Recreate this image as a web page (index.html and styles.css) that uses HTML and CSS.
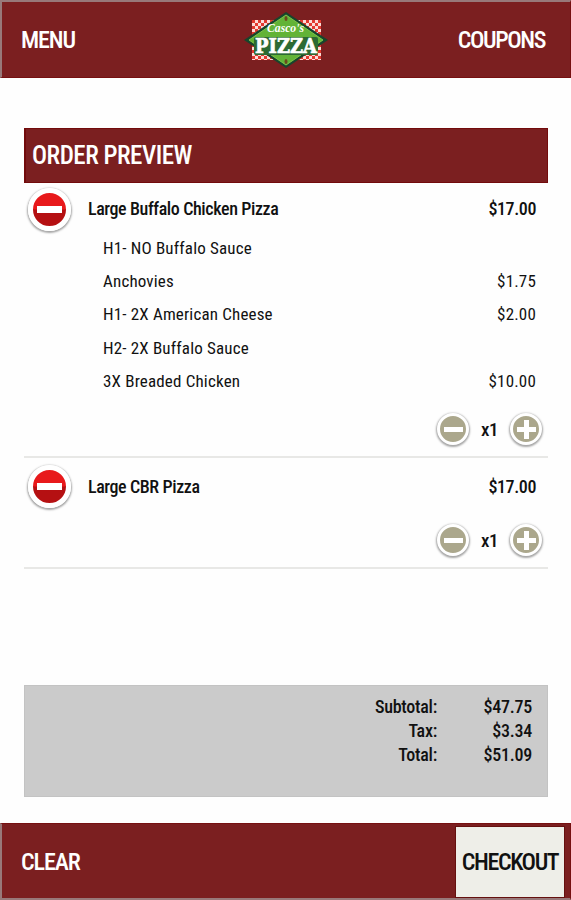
FILE: index.html
```html
<!DOCTYPE html>
<html lang="en">
  <head>
    <meta charset="UTF-8" />
    <meta name="viewport" content="width=device-width, initial-scale=1.0" />
    <title>Order Preview</title>
    <link rel="stylesheet" href="styles.css">
  </head>
  <body>
    <header class="topbar">
      <a class="nav-link">MENU</a>
      <svg class="logo" width="86" height="58" viewBox="0 0 86 58">
        <defs>
          <pattern id="check" width="6" height="6" patternUnits="userSpaceOnUse">
            <rect width="6" height="6" fill="#fbdcd8" />
            <rect width="3" height="3" fill="#e2392f" />
            <rect x="3" y="3" width="3" height="3" fill="#e2392f" />
          </pattern>
        </defs>
        <rect x="9" y="9" width="69" height="40" fill="url(#check)" />
        <path d="M43 1L85 29L43 57L1 29Z" fill="#17452c" />
        <path d="M43 4L80 29L43 54L6 29Z" fill="#62b337" stroke="#7cc648" stroke-width="1" />
        <ellipse cx="43" cy="7.500" rx="1.500" ry="2.500" fill="#6b4a1d" />
        <ellipse cx="43" cy="50.500" rx="1.500" ry="2.500" fill="#6b4a1d" />
        <rect class="logo-shade" x="11" y="26" width="64" height="18" rx="2" />
        <text class="logo-script" x="24" y="21" textLength="37" lengthAdjust="spacingAndGlyphs">Casco's</text>
        <text class="logo-name" x="12" y="42" textLength="62" lengthAdjust="spacingAndGlyphs">PIZZA</text>
      </svg>
      <a class="nav-link right">COUPONS</a>
    </header>

    <main class="order">
      <h1>ORDER PREVIEW</h1>

      <section class="item">
        <div class="item-head">
          <button class="remove"><i></i></button>
          <span class="item-name">Large Buffalo Chicken Pizza</span>
          <span class="price">$17.00</span>
        </div>
        <ul class="toppings">
          <li><span>H1- NO Buffalo Sauce</span></li>
          <li><span>Anchovies</span><span>$1.75</span></li>
          <li><span>H1- 2X American Cheese</span><span>$2.00</span></li>
          <li><span>H2- 2X Buffalo Sauce</span></li>
          <li><span>3X Breaded Chicken</span><span>$10.00</span></li>
        </ul>
        <div class="quantity">
          <button class="qty minus"></button>
          <span class="count">x1</span>
          <button class="qty plus"></button>
        </div>
      </section>

      <section class="item">
        <div class="item-head">
          <button class="remove"><i></i></button>
          <span class="item-name">Large CBR Pizza</span>
          <span class="price">$17.00</span>
        </div>
        <div class="quantity">
          <button class="qty minus"></button>
          <span class="count">x1</span>
          <button class="qty plus"></button>
        </div>
      </section>
    </main>

    <section class="totals">
      <span>Subtotal:</span><span>$47.75</span>
      <span>Tax:</span><span>$3.34</span>
      <span>Total:</span><span>$51.09</span>
    </section>

    <footer class="bottombar">
      <a class="nav-link">CLEAR</a>
      <button class="checkout">CHECKOUT</button>
    </footer>
  </body>
</html>
```

FILE: styles.css
```css
* {
  box-sizing: border-box;
}
body {
  font-family: "Roboto Condensed", Roboto, sans-serif;
  font-stretch: 75%;
  background-color: #fefefe;
  color: #111;
  margin: 0;
  height: 900px;
  display: flex;
  flex-direction: column;
  overflow: hidden;
}
button {
  border: none;
  padding: 0;
  font: inherit;
  color: inherit;
  cursor: pointer;
}
.topbar {
  height: 78px;
  background-color: #7b1f20;
  border: 1px solid #761011;
  border-top: 2px solid #98797a;
  border-left: 2px solid #98797a;
  display: grid;
  grid-template-columns: 222px 86px 1fr;
  align-items: center;
  padding: 0 25px 0 19px;
}
.nav-link {
  color: #fff;
  font-size: 24px;
  font-weight: 500;
  letter-spacing: -1.1px;
}
.nav-link.right {
  text-align: right;
  letter-spacing: -1.4px;
}
.logo {
  overflow: visible;
}
.logo-shade {
  fill: #2c6a33;
}
.logo-script {
  fill: #fff;
  font: italic bold 13px "Liberation Serif", serif;
}
.logo-name {
  fill: #fff;
  stroke: #fff;
  stroke-width: 0.7px;
  font: bold 20px "DejaVu Serif", serif;
}
.order {
  margin: 49px 23px 0 24px;
  padding-top: 1px;
}
h1 {
  margin: 0;
  height: 55px;
  padding-left: 6px;
  display: flex;
  align-items: center;
  background-color: #7b1f20;
  border: 1px solid #720b0c;
  border-left-width: 2px;
  color: #fff;
  font-size: 25px;
  font-weight: 500;
  letter-spacing: -0.5px;
}
.item {
  border-bottom: 2px solid #e8e8e6;
  padding-top: 4px;
}
.item + .item {
  padding-top: 7px;
}
.item-head {
  height: 44px;
  display: flex;
  align-items: center;
  padding: 0 12px 0 4px;
  font-size: 18px;
  font-weight: 500;
  letter-spacing: -0.4px;
}
.remove {
  width: 43px;
  height: 43px;
  border: 5px solid #fff;
  border-radius: 50%;
  background: linear-gradient(#e8191b 0 48%, #b51012 52%);
  box-shadow: 0 1px 2px 1px rgba(0, 0, 0, 0.35);
  display: flex;
  align-items: center;
  justify-content: center;
}
.remove i {
  width: 25px;
  height: 7px;
  background-color: #fff;
}
.item-name {
  margin-left: 17px;
}
.price {
  margin-left: auto;
}
.item-name,
.price {
  padding-bottom: 1px;
}
.toppings {
  list-style: none;
  margin: 0;
  padding: 0 12px 0 79px;
  font-size: 17px;
  letter-spacing: 0.17px;
}
.toppings li {
  height: 33.4px;
  display: flex;
  align-items: center;
  justify-content: space-between;
}
.quantity {
  height: 58px;
  display: flex;
  align-items: center;
  justify-content: flex-end;
  padding: 5px 6px 0 0;
  font-size: 19px;
  font-weight: 500;
  letter-spacing: -0.6px;
}
.count {
  width: 41px;
  text-align: center;
}
.qty {
  width: 32px;
  height: 32px;
  border: 3px solid #fff;
  border-radius: 50%;
  background-color: #aba78c;
  background-repeat: no-repeat;
  background-position: center;
  box-shadow: 0 1px 2px 1px rgba(0, 0, 0, 0.35);
}
.minus {
  background-image: linear-gradient(#fff, #fff);
  background-size: 19px 5px;
}
.plus {
  background-image: linear-gradient(#fff, #fff), linear-gradient(#fff, #fff);
  background-size: 19px 5px, 5px 19px;
}
.totals {
  margin: auto 23px 26px 24px;
  height: 112px;
  padding: 8px 15px 0 0;
  background-color: #cbcbcb;
  border: 1px solid #c3c3c3;
  display: grid;
  grid-template-columns: 1fr 95px;
  grid-auto-rows: 24px;
  align-items: center;
  text-align: right;
  font-size: 18px;
  font-weight: 500;
  letter-spacing: -0.25px;
}
.bottombar {
  height: 77px;
  background-color: #7b1f20;
  border: 1px solid #761011;
  border-left: 2px solid #98797a;
  border-bottom: 2px solid #98797a;
  display: flex;
  justify-content: space-between;
  align-items: center;
  padding: 2px 6px 0 19px;
}
.checkout {
  width: 108px;
  height: 70px;
  background-color: #eeeee8;
  box-shadow: 0 0 0 1px #65100f;
  font-size: 24px;
  font-weight: 500;
  letter-spacing: -1.4px;
}
```
